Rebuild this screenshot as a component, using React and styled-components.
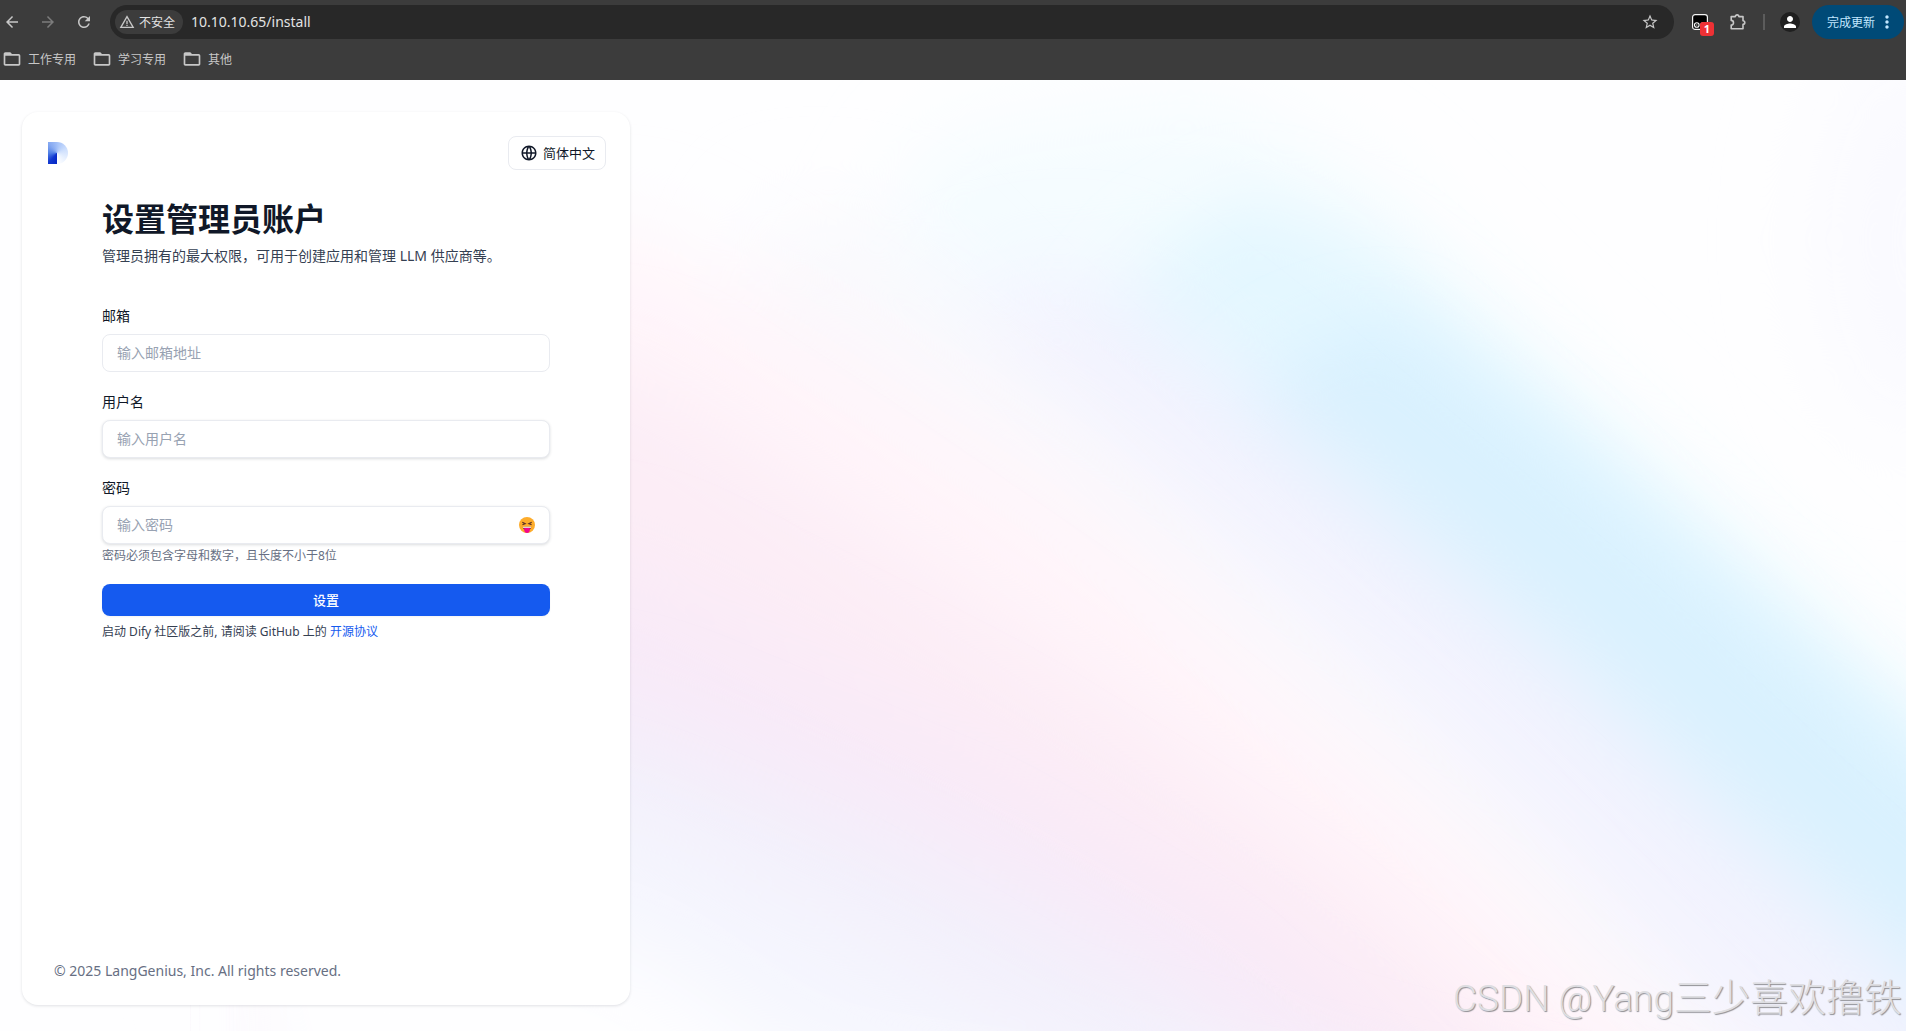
import { useState } from 'react';
import styled, { createGlobalStyle } from 'styled-components';
import {
  MdArrowBack,
  MdArrowForward,
  MdRefresh,
  MdWarningAmber,
  MdStarBorder,
  MdPerson,
  MdMoreVert,
  MdFolderOpen,
} from 'react-icons/md';
import { RiGlobalLine } from 'react-icons/ri';

const bookmarks = ['工作专用', '学习专用', '其他'];

const fields = [
  { id: 'email', label: '邮箱', type: 'email', placeholder: '输入邮箱地址' },
  { id: 'name', label: '用户名', type: 'text', placeholder: '输入用户名', raised: true },
];

const Browser = () => {
  return (
    <Chrome>
      <Toolbar>
        <NavButtons>
          <IconButton aria-label="back">
            <MdArrowBack />
          </IconButton>
          <IconButton aria-label="forward" $dim>
            <MdArrowForward />
          </IconButton>
          <IconButton aria-label="reload">
            <MdRefresh />
          </IconButton>
        </NavButtons>
        <AddressBar>
          <SiteChip type="button">
            <MdWarningAmber />
            不安全
          </SiteChip>
          <UrlInput aria-label="address" defaultValue="10.10.10.65/install" />
          <IconButton aria-label="bookmark">
            <MdStarBorder />
          </IconButton>
        </AddressBar>
        <Extensions>
          <ExtensionButton aria-label="extension">
            <svg width="16" height="16" viewBox="0 0 16 16">
              <rect x="0.6" y="0.6" width="14.8" height="14.8" rx="2.5" fill="#000" stroke="#f4f4f4" strokeWidth="1.2" />
              <circle cx="4.8" cy="11" r="2.3" fill="#000" stroke="#fff" strokeWidth="1.1" />
              <circle cx="4.8" cy="11" r="0.8" fill="#bbb" />
              <circle cx="11.2" cy="11" r="2.3" fill="#000" stroke="#fff" strokeWidth="1.1" />
            </svg>
            <Badge>1</Badge>
          </ExtensionButton>
          <IconButton aria-label="extensions">
            <svg viewBox="0 0 18 18">
              <path
                d="M2.2 3.6 H6.4 A1.7 1.7 0 0 1 9.8 3.6 H14 V7.8 A1.7 1.7 0 0 1 14 11.4 V15.8 H2.2 V12 A2.3 2.3 0 0 0 2.2 7.4 Z"
                fill="none"
                stroke="currentColor"
                strokeWidth="1.6"
                strokeLinejoin="round"
              />
            </svg>
          </IconButton>
          <Divider />
          <Avatar aria-label="profile">
            <MdPerson />
          </Avatar>
        </Extensions>
        <UpdateButton>
          完成更新
          <MdMoreVert />
        </UpdateButton>
      </Toolbar>
      <Bookmarks>
        {bookmarks.map((name) => (
          <Bookmark key={name}>
            <MdFolderOpen />
            {name}
          </Bookmark>
        ))}
      </Bookmarks>
    </Chrome>
  );
};

// each band covers everything below it, from the top right to the bottom left
const bands = [
  { fill: '#f4fcff', blur: 'soft', d: 'M940 60 L1220 20 L1360 95 L1530 255 L1700 405 L2040 710' },
  { fill: '#e4f7ff', blur: 'edge', d: 'M1160 170 L1250 115 L1370 165 L1530 300 L1690 440 L2040 750' },
  { fill: '#d9f1fe', blur: 'edge', d: 'M1300 270 L1390 240 L1560 375 L1720 515 L2040 800' },
  { fill: '#f3f3fe', blur: 'soft', d: 'M980 210 L1090 190 L1220 290 L1380 425 L1560 575 L1740 745 L2000 970' },
  { fill: '#faf9fd', blur: 'soft', d: 'M780 130 L880 140 L1000 260 L1220 460 L1390 610 L1560 780 L1770 1000' },
  { fill: '#fff5fa', blur: 'soft', d: 'M300 160 L640 150 L800 240 L1080 420 L1280 600 L1485 780 L1700 1000' },
  { fill: '#fcedf6', blur: 'soft', d: 'M300 270 L630 290 L800 400 L1120 620 L1390 830 L1550 990' },
  { fill: '#f8eaf8', blur: 'soft', d: 'M300 440 L630 490 L980 670 L1290 860 L1420 980' },
  { fill: '#f3f0fb', blur: 'soft', d: 'M300 580 L630 640 L955 775 L1190 910 L1260 980' },
  { fill: '#f5f6fe', blur: 'soft', d: 'M300 660 L630 750 L800 825 L1040 970' },
  { fill: '#fefeff', blur: 'soft', d: 'M200 780 L630 870 L800 990' },
];

const Backdrop = () => {
  return (
    <BackdropSvg viewBox="0 0 1906 951" preserveAspectRatio="none" aria-hidden="true">
      <defs>
        <filter id="soft" filterUnits="userSpaceOnUse" x="-200" y="-200" width="2400" height="1500">
          <feGaussianBlur stdDeviation="46" />
        </filter>
        <filter id="edge" filterUnits="userSpaceOnUse" x="-200" y="-200" width="2400" height="1500">
          <feGaussianBlur stdDeviation="34" />
        </filter>
      </defs>
      {bands.map(({ fill, blur, d }) => (
        <path key={d} d={`${d} L2100 1200 L300 1200 Z`} fill={fill} filter={`url(#${blur})`} />
      ))}
      <ellipse cx="1906" cy="160" rx="90" ry="200" fill="#fafaff" filter="url(#soft)" />
    </BackdropSvg>
  );
};

const Logo = () => {
  return (
    <LogoMark>
      <LogoShape role="img" aria-label="Dify" />
    </LogoMark>
  );
};

const Tongue = () => {
  return (
    <svg width="16" height="16" viewBox="0 0 16 16">
      <circle cx="8" cy="8" r="8" fill="#fdac2b" />
      <path d="M3.3 5.2 L6.2 6.7 L3.4 7.8 M12.7 5.2 L9.8 6.7 L12.6 7.8" fill="none" stroke="#5d3328" strokeWidth="1.2" />
      <path d="M3.8 9.8 H12.2 C12.2 12 10.6 13.2 8 13.2 C5.4 13.2 3.8 12 3.8 9.8 Z" fill="#7a2135" />
      <path d="M4 9.7 H12 V10.8 H4 Z" fill="#fff" />
      <path d="M5.2 11 H10.8 V13 C10.8 15 9.6 16 8 16 C6.4 16 5.2 15 5.2 13 Z" fill="#f2078d" />
    </svg>
  );
};

const App = () => {
  const [showPassword, setShowPassword] = useState(false);

  return (
    <Screen>
      <GlobalStyle />
      <Browser />
      <Page>
        <Backdrop />
        <Card>
          <CardHeader>
            <Logo />
            <LangButton>
              <RiGlobalLine />
              简体中文
            </LangButton>
          </CardHeader>
          <Content>
            <h1>设置管理员账户</h1>
            <Lead>管理员拥有的最大权限，可用于创建应用和管理 LLM 供应商等。</Lead>
            <Form onSubmit={(e) => e.preventDefault()}>
              {fields.map(({ id, label, type, placeholder, raised }) => (
                <Field key={id}>
                  <label htmlFor={id}>{label}</label>
                  <InputBox $raised={raised}>
                    <input id={id} type={type} placeholder={placeholder} />
                  </InputBox>
                </Field>
              ))}
              <Field>
                <label htmlFor="password">密码</label>
                <InputBox $raised>
                  <input
                    id="password"
                    type={showPassword ? 'text' : 'password'}
                    placeholder="输入密码"
                  />
                  <button
                    type="button"
                    aria-label="toggle password"
                    onClick={() => setShowPassword(!showPassword)}
                  >
                    <Tongue />
                  </button>
                </InputBox>
                <Hint>密码必须包含字母和数字，且长度不小于8位</Hint>
              </Field>
              <SubmitButton type="submit">设置</SubmitButton>
            </Form>
            <License>
              启动 Dify 社区版之前, 请阅读 GitHub 上的 <a href="#license">开源协议</a>
            </License>
          </Content>
          <Copyright>© 2025 LangGenius, Inc. All rights reserved.</Copyright>
        </Card>
        <Watermark>
          CSDN @Yang<span>三少喜欢撸铁</span>
        </Watermark>
      </Page>
    </Screen>
  );
};

const GlobalStyle = createGlobalStyle`
  * {
    box-sizing: border-box;
  }

  body {
    margin: 0;
    font-family: 'Noto Sans', 'Noto Sans CJK SC', sans-serif;
    color: #101828;
  }

  button,
  input {
    font-family: inherit;
    padding: 0;
    border: none;
    background: none;
  }

  button {
    cursor: pointer;
  }
`;

const Screen = styled.div`
  min-height: 100vh;
  display: flex;
  flex-direction: column;
`;

const Chrome = styled.header`
  background: #3c3c3c;
  height: 80px;
  color: #c7c7c7;
`;

const Toolbar = styled.div`
  display: flex;
  align-items: center;
  padding: 5px 2px 0 0;
`;

const NavButtons = styled.div`
  display: flex;
  gap: 16px;
  padding: 0 16px 0 2px;
`;

const IconButton = styled.button`
  width: 20px;
  height: 20px;
  display: flex;
  align-items: center;
  justify-content: center;
  color: ${({ $dim }) => ($dim ? '#7c7c7c' : '#c7c7c7')};

  svg {
    width: 18px;
    height: 18px;
    flex: none;
  }
`;

const AddressBar = styled.div`
  flex: 1;
  height: 34px;
  border-radius: 17px;
  background: #282828;
  display: flex;
  align-items: center;
  padding: 0 14px 0 5px;
`;

const SiteChip = styled.button`
  height: 24px;
  border-radius: 12px;
  background: #3c3c3c;
  color: #e3e3e3;
  font-size: 12px;
  display: flex;
  align-items: center;
  gap: 4px;
  padding: 0 8px 0 4px;

  svg {
    width: 16px;
    height: 16px;
    color: #c7c7c7;
  }
`;

const UrlInput = styled.input`
  flex: 1;
  min-width: 0;
  margin-left: 8px;
  padding-bottom: 2px;
  font-size: 14px;
  color: #e3e3e3;
  outline: none;
`;

const Extensions = styled.div`
  display: flex;
  align-items: center;
  padding: 0 12px 0 18px;
  gap: 15px;
`;

const ExtensionButton = styled.button`
  position: relative;
  width: 16px;
  height: 16px;
  margin-right: 5px;

  svg {
    display: block;
  }
`;

const Badge = styled.span`
  position: absolute;
  left: 8px;
  top: 8px;
  width: 14px;
  height: 14px;
  border-radius: 3px;
  background: #ee3135;
  color: #fff;
  font-size: 11px;
  line-height: 14px;
  font-weight: 700;
  text-align: center;
`;

const Divider = styled.div`
  width: 2px;
  height: 16px;
  background: #5c5c5c;
`;

const Avatar = styled.button`
  width: 20px;
  height: 20px;
  border-radius: 50%;
  background: #1f1f1f;
  color: #fff;
  display: flex;
  align-items: center;
  justify-content: center;

  svg {
    width: 18px;
    height: 18px;
    flex: none;
  }
`;

const UpdateButton = styled.button`
  height: 34px;
  border-radius: 17px;
  background: #004a77;
  color: #c2e7ff;
  font-size: 12px;
  display: flex;
  align-items: center;
  gap: 2px;
  padding: 0 7px 0 15px;

  svg {
    width: 20px;
    height: 20px;
  }
`;

const Bookmarks = styled.nav`
  display: flex;
  gap: 16px;
  padding: 10px 2px 0;
`;

const Bookmark = styled.button`
  display: flex;
  align-items: center;
  gap: 6px;
  height: 20px;
  font-size: 12px;
  color: #c7c7c7;

  svg {
    width: 20px;
    height: 20px;
  }
`;

const Page = styled.main`
  flex: 1;
  display: flex;
  position: relative;
  overflow: hidden;
  background: #fefeff;
  padding: 32px 22px 26px;
`;

const BackdropSvg = styled.svg`
  position: absolute;
  inset: 0;
  width: 100%;
  height: 100%;
`;

const Card = styled.section`
  position: relative;
  width: 100%;
  max-width: 608px;
  display: flex;
  flex-direction: column;
  background: #fff;
  border-radius: 16px;
  box-shadow: 0 1px 3px #10182820;
`;

const CardHeader = styled.div`
  display: flex;
  align-items: center;
  justify-content: space-between;
  padding: 24px;
`;

const LogoMark = styled.div`
  padding: 2px;
`;

const LogoShape = styled.div`
  width: 20px;
  height: 22px;
  border-radius: 0 11px 11px 0;
  background: conic-gradient(
    from 180deg at 9px 11px,
    #0527c4 0deg,
    #1238d0 40deg,
    #5080e6 90deg,
    #86a9f1 140deg,
    #a9c5f9 190deg,
    #cfe0fd 250deg,
    #eaf2ff 310deg,
    #fff 360deg
  );
`;

const LangButton = styled.button`
  height: 34px;
  display: flex;
  align-items: center;
  gap: 5px;
  padding: 0 10px 2px 11px;
  border: 1px solid #e9ebf0;
  border-radius: 8px;
  background: #fff;
  color: #101828;
  font-size: 13px;

  svg {
    width: 18px;
    height: 18px;
    margin-top: 2px;
  }
`;

const Content = styled.div`
  flex: 1;
  width: 100%;
  max-width: 448px;
  margin: 0 auto;

  h1 {
    margin: 5px 0 0;
    font-size: 32px;
    line-height: 40px;
    font-weight: 700;
  }
`;

const Lead = styled.p`
  margin: 7px 0 0;
  font-size: 14px;
  line-height: 20px;
  color: #354052;
`;

const Form = styled.form`
  margin-top: 40px;
`;

const Field = styled.div`
  margin-bottom: 20px;

  label {
    display: block;
    margin-bottom: 8px;
    font-size: 14px;
    line-height: 20px;
  }
`;

const InputBox = styled.div`
  display: flex;
  align-items: center;
  height: 38px;
  padding: 0 14px;
  border: 1px solid #e9ebf0;
  border-radius: 8px;
  background: #fff;
  box-shadow: ${({ $raised }) => ($raised ? '0 1px 3px #10182826' : 'none')};

  input {
    flex: 1;
    min-width: 0;
    padding-bottom: 2px;
    font-size: 14px;
    color: #101828;
    outline: none;
  }

  input::placeholder {
    color: #98a2b2;
    opacity: 1;
  }

  svg {
    display: block;
  }
`;

const Hint = styled.p`
  margin: 2px 0 0;
  font-size: 12px;
  line-height: 20px;
  color: #676f83;
`;

const SubmitButton = styled.button`
  width: 100%;
  height: 32px;
  margin-top: -2px;
  padding-bottom: 2px;
  border-radius: 8px;
  background: #155aef;
  color: #fff;
  font-size: 13px;
  font-weight: 500;
  box-shadow: 0 1px 2px #1018280d;
`;

const License = styled.p`
  margin: 6px 0 0;
  font-size: 12px;
  line-height: 20px;
  color: #354052;

  a {
    color: #155aef;
    text-decoration: none;
  }
`;

const Copyright = styled.footer`
  padding: 24px 32px;
  font-size: 14px;
  line-height: 20px;
  color: #676f83;
`;

const Watermark = styled.div`
  position: absolute;
  right: 4px;
  bottom: 6px;
  font-family: Roboto, 'Noto Sans CJK SC', sans-serif;
  font-size: 37px;
  line-height: 52px;
  font-weight: 300;
  color: #dedee2;
  text-shadow: 1px 1px 1px #8f8f94;

  span {
    font-size: 38px;
  }
`;

export default App;
